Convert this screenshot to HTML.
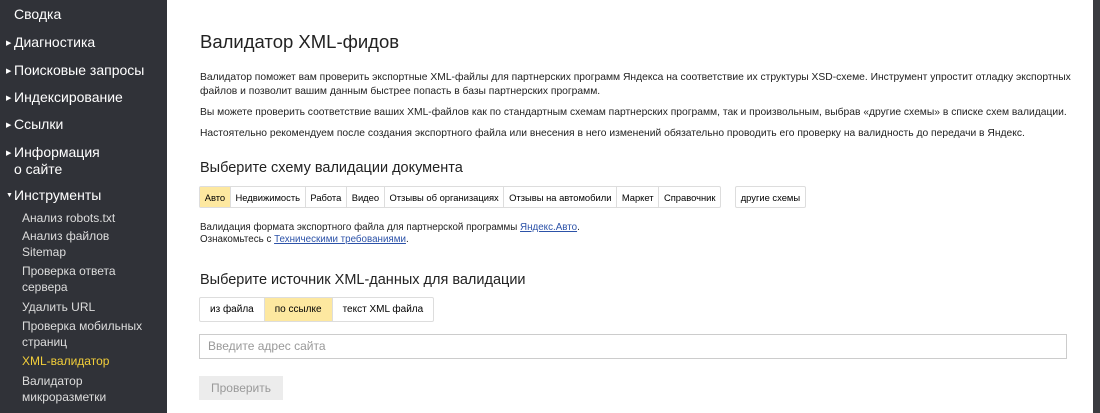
<!DOCTYPE html><html><head><meta charset="utf-8"><style>
body{margin:0;width:1100px;height:413px;overflow:hidden;font-family:"Liberation Sans",sans-serif;background:#fff;position:relative}
.sb{position:absolute;left:0;top:0;width:167px;height:413px;background:#303238;color:#fff}
.sb div{position:absolute;left:14px;font-size:14px;white-space:nowrap}
.sb .s{font-size:12px;left:22px;color:#ddd;line-height:16px}
.ar{position:absolute;left:6px!important;font-size:7px!important}
.rt{position:absolute;left:1093px;top:0;width:7px;height:413px;background:#3a3b40}
.m{position:absolute;left:200px;font-size:10.3px;color:#222;white-space:nowrap}
.tabs{position:absolute;display:flex;border:1px solid #ddd;border-radius:2px}
.tabs span{font-size:9.4px;padding:0 4.7px;border-right:1px solid #ddd;display:flex;align-items:center}
.tabs span:last-child{border-right:0}
.y{background:#fde8a0}
a{color:#2c52a8}
</style></head><body>
<div class="sb">
<div style="top:6px">Сводка</div>
<div class="ar" style="top:39px">▶</div><div style="top:34px">Диагностика</div>
<div class="ar" style="top:67px">▶</div><div style="top:62px">Поисковые запросы</div>
<div class="ar" style="top:94px">▶</div><div style="top:89px">Индексирование</div>
<div class="ar" style="top:121px">▶</div><div style="top:116px">Ссылки</div>
<div class="ar" style="top:149px">▶</div><div style="top:144px;line-height:17px">Информация<br>о сайте</div>
<div class="ar" style="top:192px">▼</div><div style="top:187px">Инструменты</div>
<div class="s" style="top:210px">Анализ robots.txt</div>
<div class="s" style="top:228px">Анализ файлов<br>Sitemap</div>
<div class="s" style="top:263px">Проверка ответа<br>сервера</div>
<div class="s" style="top:299px">Удалить URL</div>
<div class="s" style="top:318px">Проверка мобильных<br>страниц</div>
<div class="s" style="top:353px;color:#f3cf3a">XML-валидатор</div>
<div class="s" style="top:373px">Валидатор<br>микроразметки</div>
</div>
<div class="rt"></div>
<div class="m" style="top:31px;font-size:18.5px">Валидатор XML-фидов</div>
<div class="m" style="top:71px;line-height:14px">Валидатор поможет вам проверить экспортные XML-файлы для партнерских программ Яндекса на соответствие их структуры XSD-схеме. Инструмент упростит отладку экспортных<br>файлов и позволит вашим данным быстрее попасть в базы партнерских программ.</div>
<div class="m" style="top:107px">Вы можете проверить соответствие ваших XML-файлов как по стандартным схемам партнерских программ, так и произвольным, выбрав «другие схемы» в списке схем валидации.</div>
<div class="m" style="top:128px">Настоятельно рекомендуем после создания экспортного файла или внесения в него изменений обязательно проводить его проверку на валидность до передачи в Яндекс.</div>
<div class="m" style="top:160px;font-size:14.5px">Выберите схему валидации документа</div>
<div class="tabs" style="left:199px;top:186px;height:20px"><span class="y">Авто</span><span>Недвижимость</span><span>Работа</span><span>Видео</span><span>Отзывы об организациях</span><span>Отзывы на автомобили</span><span>Маркет</span><span>Справочник</span></div>
<div class="tabs" style="left:735px;top:186px;height:20px"><span>другие схемы</span></div>
<div class="m" style="top:222px;line-height:12px;font-size:9.8px">Валидация формата экспортного файла для партнерской программы <a href="#">Яндекс.Авто</a>.<br>Ознакомьтесь с <a href="#">Техническими требованиями</a>.</div>
<div class="m" style="top:272px;font-size:14.5px">Выберите источник XML-данных для валидации</div>
<div class="tabs" style="left:199px;top:297px;height:23px"><span style="padding:0 10px;font-size:10px">из файла</span><span class="y" style="padding:0 10px;font-size:10px">по ссылке</span><span style="padding:0 10px;font-size:10px">текст XML файла</span></div>
<div style="position:absolute;left:199px;top:334px;width:866px;height:23px;border:1px solid #ccc;font-size:12px;color:#999;line-height:23px;text-indent:8px">Введите адрес сайта</div>
<div style="position:absolute;left:199px;top:376px;width:84px;height:24px;background:#ececec;color:#999;font-size:12px;line-height:24px;text-align:center">Проверить</div>
</body></html>
